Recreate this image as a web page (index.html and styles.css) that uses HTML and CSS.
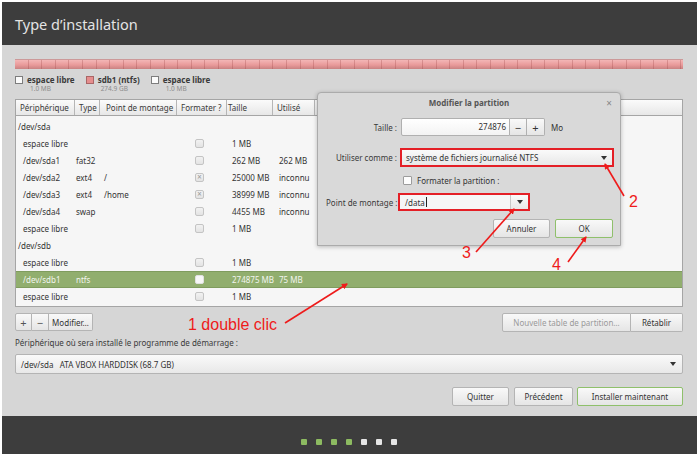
FILE: index.html
```html
<!DOCTYPE html>
<html lang="fr">
<head>
    <meta charset="UTF-8">
    <title>Type d’installation</title>
    <link rel="stylesheet" href="styles.css">
</head>
<body>
    <div class="window">
        <header class="topbar">
            <h1>Type d’installation</h1>
        </header>

        <main class="content">
            <div class="disk-bar"></div>

            <div class="legend">
                <div class="legend-item">
                    <span class="swatch"></span>
                    <div><b>espace libre</b><small>1.0 MB</small></div>
                </div>
                <div class="legend-item">
                    <span class="swatch swatch-ntfs"></span>
                    <div><b>sdb1 (ntfs)</b><small>274.9 GB</small></div>
                </div>
                <div class="legend-item">
                    <span class="swatch"></span>
                    <div><b>espace libre</b><small>1.0 MB</small></div>
                </div>
            </div>

            <div class="ptable">
                <div class="prow phead">
                    <span>Périphérique</span>
                    <span>Type</span>
                    <span>Point de montage</span>
                    <span>Formater ?</span>
                    <span>Taille</span>
                    <span>Utilisé</span>
                    <span></span>
                </div>
                <div class="pbody">
                    <div class="prow disk"><span>/dev/sda</span></div>
                    <div class="prow"><span>espace libre</span><span></span><span></span><span><i class="cb"></i></span><span>1 MB</span><span></span></div>
                    <div class="prow"><span>/dev/sda1</span><span>fat32</span><span></span><span><i class="cb"></i></span><span>262 MB</span><span>262 MB</span></div>
                    <div class="prow"><span>/dev/sda2</span><span>ext4</span><span>/</span><span><i class="cb checked"></i></span><span>25000 MB</span><span>inconnu</span></div>
                    <div class="prow"><span>/dev/sda3</span><span>ext4</span><span>/home</span><span><i class="cb checked"></i></span><span>38999 MB</span><span>inconnu</span></div>
                    <div class="prow"><span>/dev/sda4</span><span>swap</span><span></span><span><i class="cb"></i></span><span>4455 MB</span><span>inconnu</span></div>
                    <div class="prow"><span>espace libre</span><span></span><span></span><span><i class="cb"></i></span><span>1 MB</span><span></span></div>
                    <div class="prow disk"><span>/dev/sdb</span></div>
                    <div class="prow"><span>espace libre</span><span></span><span></span><span><i class="cb"></i></span><span>1 MB</span><span></span></div>
                    <div class="prow selected"><span>/dev/sdb1</span><span>ntfs</span><span></span><span><i class="cb"></i></span><span>274875 MB</span><span>75 MB</span></div>
                    <div class="prow"><span>espace libre</span><span></span><span></span><span><i class="cb"></i></span><span>1 MB</span><span></span></div>
                </div>
            </div>

            <div class="table-tools">
                <div class="btn-group">
                    <button class="btn btn-icon">+</button>
                    <button class="btn btn-icon">−</button>
                    <button class="btn btn-modify">Modifier…</button>
                </div>
                <div class="btn-group">
                    <button class="btn btn-newtable" disabled>Nouvelle table de partition…</button>
                    <button class="btn btn-reset">Rétablir</button>
                </div>
            </div>

            <div class="boot-label">Périphérique où sera installé le programme de démarrage :</div>
            <div class="combo boot-combo">
                <span>/dev/sda&nbsp;&nbsp;&nbsp;ATA VBOX HARDDISK (68.7 GB)</span>
                <span class="caret"></span>
            </div>

            <div class="actions">
                <button class="btn btn-quit">Quitter</button>
                <button class="btn btn-prev">Précédent</button>
                <button class="btn btn-install">Installer maintenant</button>
            </div>
        </main>

        <footer class="steps">
            <span class="dot done"></span>
            <span class="dot done"></span>
            <span class="dot done"></span>
            <span class="dot done"></span>
            <span class="dot"></span>
            <span class="dot"></span>
            <span class="dot"></span>
        </footer>

        <!-- edit dialog floating over the table -->
        <div class="dialog">
            <div class="dialog-title">Modifier la partition <span class="close">×</span></div>
            <div class="dialog-row row-size">
                <label>Taille :</label>
                <div class="spin">
                    <span class="spin-value">274876</span>
                    <button class="spin-btn">−</button>
                    <button class="spin-btn">+</button>
                </div>
                <span class="unit">Mo</span>
            </div>
            <div class="dialog-row row-use">
                <label>Utiliser comme :</label>
                <div class="combo marked use-combo">
                    <span>système de fichiers journalisé NTFS</span>
                    <span class="caret"></span>
                </div>
            </div>
            <div class="dialog-row row-format">
                <label></label>
                <span class="check"></span>
                <span>Formater la partition :</span>
            </div>
            <div class="dialog-row row-mount">
                <label>Point de montage :</label>
                <div class="combo marked mount-combo">
                    <span class="entry">/data<i class="cursor"></i></span>
                    <span class="combo-btn"><span class="caret"></span></span>
                </div>
            </div>
            <div class="dialog-buttons">
                <button class="btn btn-cancel">Annuler</button>
                <button class="btn btn-ok">OK</button>
            </div>
        </div>

        <!-- red annotations drawn on top of the screenshot -->
        <svg class="notes" width="699" height="457" viewBox="0 0 699 457">
            <defs>
                <marker id="tip" markerWidth="6" markerHeight="6" refX="5" refY="3" orient="auto" markerUnits="userSpaceOnUse">
                    <path d="M0,0 L6,3 L0,6 Z" fill="#ee1b1b"/>
                </marker>
            </defs>
            <line x1="285" y1="323" x2="347" y2="284" marker-end="url(#tip)"/>
            <line x1="624" y1="196" x2="605" y2="164" marker-end="url(#tip)"/>
            <line x1="476" y1="252" x2="514" y2="209" marker-end="url(#tip)"/>
            <line x1="568" y1="262" x2="586" y2="237" marker-end="url(#tip)"/>
            <text x="188" y="330">1 double clic</text>
            <text x="629" y="207">2</text>
            <text x="462" y="258">3</text>
            <text x="552" y="270">4</text>
        </svg>
    </div>
</body>
</html>
```

FILE: styles.css
```css
* { box-sizing: border-box; }

body {
    margin: 0;
    background: #fff;
    font-family: "Noto Sans", "DejaVu Sans", sans-serif;
    font-size: 8px;
    color: #333;
}

.window {
    position: relative;
    margin: 2px;
    width: 695px;
    height: 452px;
}

.topbar {
    height: 43px;
    background: #3d3d3d;
    display: flex;
    align-items: center;
    padding-left: 13px;
}

.topbar h1 {
    margin: 0;
    font-size: 14.5px;
    font-weight: normal;
    color: #e4e4e4;
}

.content {
    height: 371px;
    background: #d6d6d6;
    padding: 14px 14px 0 13px;
}

.disk-bar {
    height: 10px;
    background:
        repeating-linear-gradient(90deg, transparent 0 12.6px, rgba(150, 60, 60, 0.28) 12.6px 13.6px),
        linear-gradient(#f3b6b6, #e99a9a 55%, #c98282);
    border-top: 1px solid #c99;
}

.legend {
    display: flex;
    gap: 11px;
    margin-top: 6px;
    height: 18px;
}

.legend-item {
    display: flex;
    gap: 4px;
}

.legend-item b {
    display: block;
    line-height: 10px;
    color: #3a3a3a;
}

.legend-item small {
    display: block;
    font-size: 6.5px;
    line-height: 8px;
    color: #8c8c8c;
    padding-left: 3px;
}

.swatch {
    width: 8px;
    height: 8px;
    margin-top: 1px;
    border: 1px solid #7d7d7d;
    background: #fbfbfb;
}

.swatch-ntfs {
    background: #e58e8e;
    border-color: #a66;
}

/* partition list */
.ptable {
    margin-top: 6px;
    height: 208px;
    border: 1px solid #a5a5a5;
    background: #f6f6f6;
}

.prow {
    display: grid;
    grid-template-columns: 59px 25px 77px 50px 46px 42px 1fr;
    height: 17px;
    align-items: center;
    white-space: nowrap;
}

.phead {
    height: 16px;
    background: linear-gradient(#fbfbfb, #e7e7e7);
    border-bottom: 1px solid #a5a5a5;
    color: #3a3a3a;
}

.phead span {
    height: 100%;
    line-height: 15px;
    padding-left: 4px;
    border-right: 1px solid #b6b6b6;
}

.phead span:nth-child(3) { padding-left: 6px; }
.phead span:nth-child(5) { padding-left: 1px; }
.phead span:last-child { border-right: none; }

.pbody {
    padding-top: 2px;
}

.prow:not(.phead) span:nth-child(1) { padding-left: 7px; }
.prow:not(.phead) span:nth-child(2) { padding-left: 1px; }
.prow:not(.phead) span:nth-child(3) { padding-left: 4px; }
.prow:not(.phead) span:nth-child(4) { padding-left: 18px; display: flex; }
.prow:not(.phead) span:nth-child(5) { padding-left: 5px; }
.prow:not(.phead) span:nth-child(6) { padding-left: 6px; }

.prow.disk span:nth-child(1) { padding-left: 2px; }

.prow.selected {
    background: #91ae6e;
    color: #f2f5ee;
    border-top: 1px solid #7f9c5e;
    border-bottom: 1px solid #7f9c5e;
}

.cb {
    width: 9px;
    height: 9px;
    border: 1px solid #c4c4c4;
    border-radius: 2px;
    background: linear-gradient(#f2f2f2, #e3e3e3);
    position: relative;
}

.cb.checked::after {
    content: "×";
    position: absolute;
    left: 1px;
    top: -3px;
    font-size: 8px;
    color: #9a9a9a;
}

.selected .cb {
    border-color: #e0e0e0;
    background: #f7f7f7;
}

/* buttons */
.btn {
    font-family: inherit;
    font-size: 8px;
    color: #333;
    height: 19px;
    padding: 0;
    border: 1px solid #b4b4b4;
    border-radius: 2px;
    background: linear-gradient(#f9f9f9, #e5e5e5);
}

.btn:disabled {
    color: #9a9a9a;
}

.table-tools {
    display: flex;
    justify-content: space-between;
    margin-top: 6px;
}

.btn-group {
    display: flex;
}

.btn-group .btn { border-radius: 0; }
.btn-group .btn + .btn { border-left: none; }
.btn-group .btn:first-child { border-radius: 2px 0 0 2px; }
.btn-group .btn:last-child { border-radius: 0 2px 2px 0; }

.btn-icon {
    width: 17px;
    height: 18px;
    font-size: 11px;
    color: #555;
    line-height: 1;
}

.btn-modify { width: 44px; height: 18px; }
.btn-newtable { width: 129px; }
.btn-reset { width: 52px; }

.boot-label {
    margin-top: 5px;
    line-height: 12px;
    color: #3a3a3a;
}

.combo {
    display: flex;
    align-items: center;
    justify-content: space-between;
    border: 1px solid #b4b4b4;
    border-radius: 2px;
    background: linear-gradient(#fafafa, #e8e8e8);
    white-space: nowrap;
}

.caret {
    width: 0;
    height: 0;
    border-left: 3.5px solid transparent;
    border-right: 3.5px solid transparent;
    border-top: 4px solid #333;
}

.boot-combo {
    margin-top: 5px;
    height: 20px;
    padding: 0 6px 0 5px;
}

.actions {
    display: flex;
    justify-content: flex-end;
    gap: 5px;
    margin-top: 13px;
}

.btn-quit { width: 57px; }
.btn-prev { width: 59px; margin-right: -1px; }
.btn-install {
    width: 106px;
    border-color: #8fc06b;
}

/* step indicator */
.steps {
    height: 38px;
    background: #3d3d3d;
    display: flex;
    justify-content: center;
    gap: 9px;
    padding: 23px 2px 0 0;
}

.dot {
    width: 6px;
    height: 6px;
    border-radius: 1px;
    background: #e6e6e6;
}

.dot.done {
    background: #8dbb61;
}

/* dialog */
.dialog {
    position: absolute;
    left: 315px;
    top: 90px;
    width: 304px;
    height: 154px;
    background: #d9d9d9;
    border: 1px solid #ababab;
    border-radius: 4px 4px 0 0;
    box-shadow: 0 1px 4px rgba(0, 0, 0, 0.25);
    padding: 0 0 0 8px;
}

.dialog-title {
    position: relative;
    height: 20px;
    line-height: 20px;
    text-align: center;
    font-weight: bold;
    color: #555;
    margin-left: -8px;
}

.close {
    position: absolute;
    right: 8px;
    top: 0;
    font-weight: normal;
    font-size: 10px;
    color: #888;
}

.dialog-row {
    display: flex;
    align-items: center;
    gap: 3px;
    white-space: nowrap;
}

.dialog-row label {
    width: 71px;
    flex: none;
    text-align: right;
    color: #3a3a3a;
}

.row-size { margin-top: 5px; height: 18px; }
.row-use { margin-top: 12px; height: 19px; }
.row-format { margin-top: 9px; height: 9px; }
.row-mount { margin-top: 8px; height: 18px; }

.spin {
    display: flex;
    height: 18px;
    margin-left: 1px;
}

.spin-value {
    width: 109px;
    line-height: 16px;
    text-align: right;
    padding-right: 3px;
    border: 1px solid #b0b0b0;
    border-radius: 2px 0 0 2px;
    background: linear-gradient(#fff, #f3f3f3);
}

.spin-btn {
    width: 17px;
    height: 18px;
    padding: 0;
    font-family: inherit;
    font-size: 11px;
    line-height: 1;
    color: #333;
    border: 1px solid #b0b0b0;
    border-left: none;
    background: linear-gradient(#f9f9f9, #e5e5e5);
}

.spin-btn:last-child {
    width: 18px;
    border-radius: 0 2px 2px 0;
}

.unit { margin-left: 3px; }

.combo.marked {
    border: 2px solid #e41f26;
    border-radius: 0;
}

.use-combo {
    width: 214px;
    height: 19px;
    padding: 0 5px 0 4px;
}

.check {
    width: 9px;
    height: 9px;
    margin-left: 3px;
    border: 1px solid #9c9c9c;
    border-radius: 1px;
    background: #fdfdfd;
}

.row-format .check + span { margin-left: 2px; }

.mount-combo {
    width: 132px;
    height: 18px;
    margin-left: -2px;
    padding: 0;
    align-items: stretch;
}

.entry {
    flex: 1;
    display: flex;
    align-items: center;
    padding-left: 5px;
    background: #f6f6f6;
}

.cursor {
    width: 1px;
    height: 10px;
    margin-left: 1px;
    background: #222;
}

.combo-btn {
    width: 18px;
    display: flex;
    align-items: center;
    justify-content: center;
    border-left: 1px solid #c8c8c8;
}

.dialog-buttons {
    display: flex;
    justify-content: flex-end;
    gap: 5px;
    margin: 8px 7px 0 0;
}

.btn-cancel { width: 57px; }
.btn-ok {
    width: 58px;
    border-color: #8fc06b;
}

/* annotations */
.notes {
    position: absolute;
    left: -2px;
    top: -2px;
    pointer-events: none;
}

.notes line {
    stroke: #ee1b1b;
    stroke-width: 1.6;
}

.notes text {
    font-family: "Liberation Sans", Arial, sans-serif;
    font-size: 16px;
    fill: #ee1b1b;
}
```
